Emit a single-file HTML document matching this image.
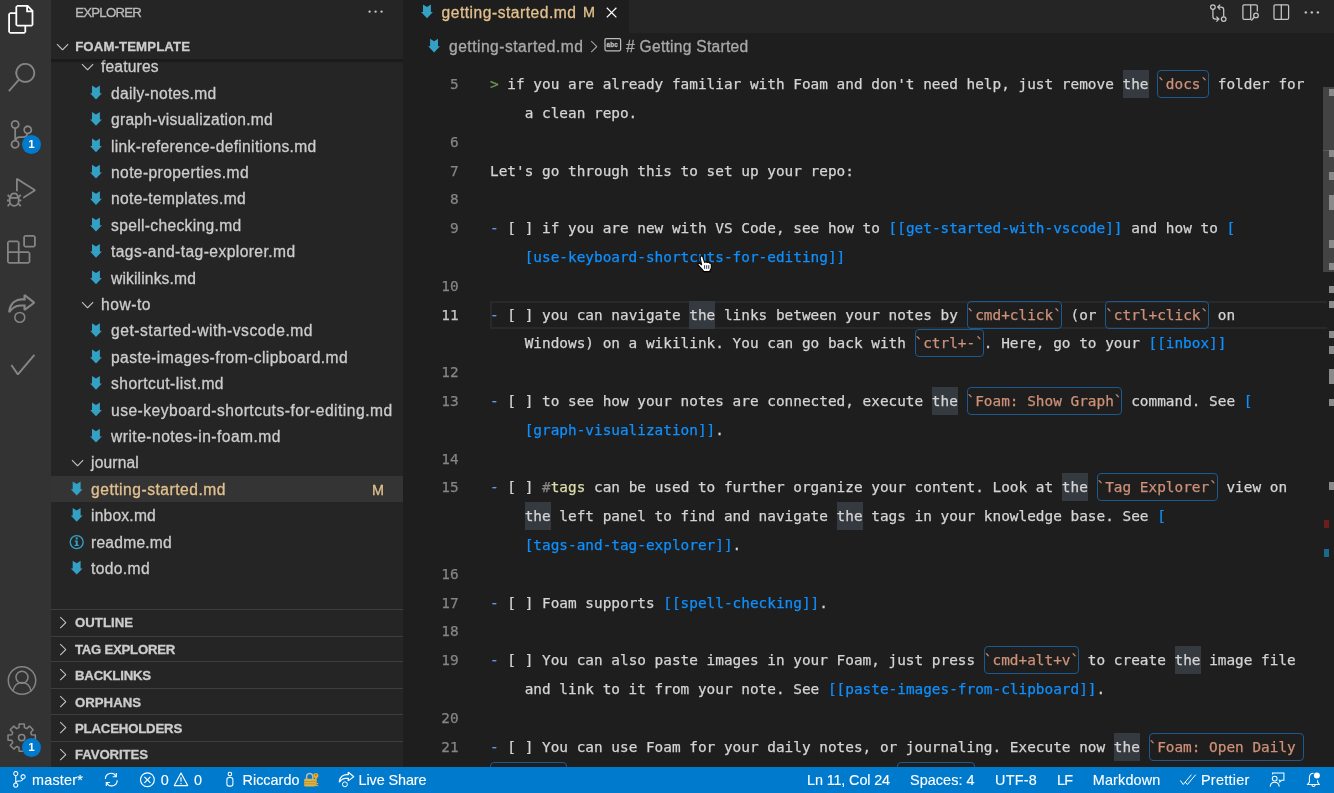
<!DOCTYPE html><html lang="en"><head><meta charset="utf-8"><title>getting-started.md - foam-template</title><style>
*{box-sizing:border-box;margin:0;padding:0}
html,body{width:1334px;height:793px;overflow:hidden;background:#1e1e1e}
body{position:relative;font-family:"Liberation Sans",sans-serif;color:#ccc;-webkit-font-smoothing:antialiased}
.abs{position:absolute}
#root{position:absolute;left:0;top:0;width:1334px;height:793px;overflow:hidden;will-change:transform}
#act{position:absolute;left:0;top:0;width:51px;height:767px;background:#333333}
#side{position:absolute;left:51px;top:0;width:352px;height:767px;background:#252526;overflow:hidden}
#ed{position:absolute;left:403px;top:0;width:931px;height:767px;background:#1e1e1e;overflow:hidden}
#status{position:absolute;left:0;top:767px;width:1334px;height:26px;background:#007acc;color:#fff;font-size:14.4px;line-height:26px;white-space:nowrap}
.t{position:absolute;white-space:pre;display:block;-webkit-text-stroke:0.3px currentColor;margin-top:1px}
.code{font-family:"DejaVu Sans Mono","Liberation Mono",monospace;font-size:14.4px;line-height:28.8px;white-space:pre;color:#d4d4d4;-webkit-text-stroke:0.25px currentColor}
.ln{position:absolute;left:0;width:55.6px;text-align:right;color:#858585}
.ln.cur{color:#c6c6c6}
.cl{position:absolute;height:28.8px}
.hl{position:absolute;height:28.4px;background:#343a40}
.cb{position:absolute;height:28.4px;border:1px solid #1b598f;border-radius:4px}
.k-q{color:#6a9955}.k-l{color:#6796e6}.k-w{color:#0e90ff}.k-c{color:#ce9178}.k-h{color:#858585}.k-t{color:#dcdcaa}
span.st{-webkit-text-stroke:0.12px currentColor}
svg{position:absolute;overflow:visible}
</style></head><body>
<div id="root"><div id="act"></div><div id="side"></div><div id="ed"></div>
<svg style="left:7.20px;top:5.10px" width="28.80" height="28.80" viewBox="0 0 24 24" fill="#ffffff" ><path d="M17.5 0h-9L7 1.5V6H2.5L1 7.5v15.07L2.5 24h12.07L16 22.57V18h4.7l1.3-1.43V4.5L17.5 0zm0 2.12l2.38 2.38H17.5V2.12zm-3 20.38h-12v-15H7v9.07L8.5 18h6v4.5zm6-6h-12v-15H16V6h4.5v10.5z"/></svg>
<svg style="left:7.20px;top:62.70px" width="28.80" height="28.80" viewBox="0 0 24 24" fill="#858585" ><path d="M15.25 0a8.25 8.25 0 0 0-6.18 13.72L1 22.88l1.12 1 8.05-9.12A8.251 8.251 0 1 0 15.25.01V0zm0 15a6.75 6.75 0 1 1 0-13.5 6.75 6.75 0 0 1 0 13.5z"/></svg>
<svg style="left:7.00px;top:120.30px" width="28.80" height="28.80" viewBox="0 0 24 24" fill="#858585" ><path d="M21.007 8.222A3.738 3.738 0 0 0 15.045 5.2a3.737 3.737 0 0 0 1.156 6.583 2.988 2.988 0 0 1-2.668 1.67h-2.99a4.456 4.456 0 0 0-2.989 1.165V7.4a3.737 3.737 0 1 0-1.494 0v9.117a3.776 3.776 0 1 0 1.816.099 2.99 2.99 0 0 1 2.668-1.667h2.99a4.484 4.484 0 0 0 4.223-3.039 3.736 3.736 0 0 0 3.25-3.687zM4.565 3.738a2.242 2.242 0 1 1 4.484 0 2.242 2.242 0 0 1-4.484 0zm4.484 16.441a2.242 2.242 0 1 1-4.484 0 2.242 2.242 0 0 1 4.484 0zm8.221-9.715a2.242 2.242 0 1 1 0-4.485 2.242 2.242 0 0 1 0 4.485z"/></svg>
<div class="abs" style="left:22.1px;top:135.0px;width:18.8px;height:18.8px;border-radius:50%;background:#007acc;color:#fff;font-size:11.5px;font-weight:bold;line-height:19.4px;text-align:center">1</div>
<svg style="left:7.00px;top:177.90px" width="28.80" height="28.80" viewBox="0 0 24 24" fill="#858585" ><path d="M10.94 13.5l-1.32 1.32a3.73 3.73 0 0 0-7.24 0L1.06 13.5 0 14.56l1.72 1.72-.22.22V18H0v1.5h1.5v.08c.077.489.214.966.41 1.42L0 22.94 1.06 24l1.65-1.65A4.308 4.308 0 0 0 6 24a4.31 4.31 0 0 0 3.29-1.65L10.94 24 12 22.94 10.09 21c.198-.464.336-.951.41-1.45v-.1H12V18h-1.5v-1.5l-.22-.22L12 14.56l-1.06-1.06zM6 13.5a2.25 2.25 0 0 1 2.25 2.25h-4.5A2.25 2.25 0 0 1 6 13.5zm3 6a3.33 3.33 0 0 1-3 3 3.33 3.33 0 0 1-3-3v-2.25h6v2.25zm14.76-9.9v1.26L13.5 17.37V15.6l8.5-5.37L9 2v9.46a5.07 5.07 0 0 0-1.5-.72V.63L8.64 0l15.12 9.6z"/></svg>
<svg style="left:6.60px;top:234.50px" width="28.80" height="28.80" viewBox="0 0 24 24" fill="#858585" ><path d="M13.5 1.5L15 0h7.5L24 1.5V9l-1.5 1.5H15L13.5 9V1.5zm1.5 0V9h7.5V1.5H15zM0 15V6l1.5-1.5H9L10.5 6v7.5H18l1.5 1.5v7.5L18 24H1.5L0 22.5V15zm9-1.5V6H1.5v7.5H9zM9 15H1.5v7.5H9V15zm1.5 7.5H18V15h-7.5v7.5z" fill-rule="evenodd"/></svg>
<svg style="left:7.20px;top:293.00px" width="28.80" height="28.80" viewBox="0 0 24 24" fill="#858585" ><path d="M13.735 1.694L15.178 1l8.029 6.328v1.388l-8.029 6.072-1.443-.694v-2.776h-.59c-4.06-.02-6.71.104-10.61 5.163l-1.534-.493a8.23 8.23 0 0 1 .271-2.255 11.026 11.026 0 0 1 3.92-6.793 11.339 11.339 0 0 1 7.502-2.547h1.04v-2.7zm1.804 7.917v2.776l5.676-4.3-5.648-4.553v2.664h-2.86A9.299 9.299 0 0 0 5.77 8.5a10.444 10.444 0 0 0-2.401 4.714c3.31-3.586 6.13-3.603 10.07-3.603h2.1z"/></svg>
<svg style="left:0;top:0" width="1" height="1"><circle cx="19.8" cy="317.4" r="4.95" fill="none" stroke="#858585" stroke-width="1.5"/></svg>
<svg style="left:6.60px;top:348.70px" width="31.20" height="31.20" viewBox="0 0 16 16" fill="#858585" ><path d="M14.431 3.323l-8.47 10-.79-.036-3.35-4.77.818-.574 2.978 4.24 8.051-9.506.764.646z"/></svg>
<svg style="left:0;top:0" width="1" height="1"><g fill="none" stroke="#858585" stroke-width="1.5"><circle cx="22" cy="680.5" r="13.7"/><circle cx="22" cy="677.2" r="6.0"/><path d="M13.00 691.50C13.80 679.50 30.20 679.50 31.00 691.50"/></g></svg>
<svg style="left:0;top:0" width="1" height="1"><g fill="none" stroke="#858585" stroke-width="1.5" stroke-linejoin="round"><path d="M31.63 734.85 L35.36 735.04 L35.36 740.16 L31.63 740.35 L30.66 742.68 L33.17 745.45 L29.55 749.07 L26.78 746.56 L24.45 747.53 L24.26 751.26 L19.14 751.26 L18.95 747.53 L16.62 746.56 L13.85 749.07 L10.23 745.45 L12.74 742.68 L11.77 740.35 L8.04 740.16 L8.04 735.04 L11.77 734.85 L12.74 732.52 L10.23 729.75 L13.85 726.13 L16.62 728.64 L18.95 727.67 L19.14 723.94 L24.26 723.94 L24.45 727.67 L26.78 728.64 L29.55 726.13 L33.17 729.75 L30.66 732.52Z"/><circle cx="21.7" cy="737.6" r="3.2"/></g></svg>
<div class="abs" style="left:22.1px;top:738.0px;width:18.8px;height:18.8px;border-radius:50%;background:#007acc;color:#fff;font-size:11.5px;font-weight:bold;line-height:19.4px;text-align:center">1</div>
<svg style="left:78.20px;top:57.30px" width="19.20" height="19.20" viewBox="0 0 16 16" fill="#c5c5c5" ><path d="M7.976 10.072l4.357-4.357.62.618L8.284 11h-.618L3 6.333l.619-.618 4.357 4.357z"/></svg>
<span class="t " style="left:101.00px;top:53.40px;font-size:15.6px;line-height:26.4px;color:#cccccc;letter-spacing:0.168px;">features</span>
<svg style="left:0;top:0" width="1" height="1"><path d="M91.99 85.60 L96.00 88.08 L99.89 85.60 L99.89 93.19 L101.90 93.19 L96.00 99.40 L90.10 93.19 L91.99 93.19Z" fill="#34a0c4"/></svg>
<span class="t " style="left:111.00px;top:79.80px;font-size:15.6px;line-height:26.4px;color:#cccccc;letter-spacing:0.292px;">daily-notes.md</span>
<svg style="left:0;top:0" width="1" height="1"><path d="M91.99 112.00 L96.00 114.48 L99.89 112.00 L99.89 119.59 L101.90 119.59 L96.00 125.80 L90.10 119.59 L91.99 119.59Z" fill="#34a0c4"/></svg>
<span class="t " style="left:111.00px;top:106.20px;font-size:15.6px;line-height:26.4px;color:#cccccc;letter-spacing:0.272px;">graph-visualization.md</span>
<svg style="left:0;top:0" width="1" height="1"><path d="M91.99 138.40 L96.00 140.88 L99.89 138.40 L99.89 145.99 L101.90 145.99 L96.00 152.20 L90.10 145.99 L91.99 145.99Z" fill="#34a0c4"/></svg>
<span class="t " style="left:111.00px;top:132.60px;font-size:15.6px;line-height:26.4px;color:#cccccc;letter-spacing:0.332px;">link-reference-definitions.md</span>
<svg style="left:0;top:0" width="1" height="1"><path d="M91.99 164.80 L96.00 167.28 L99.89 164.80 L99.89 172.39 L101.90 172.39 L96.00 178.60 L90.10 172.39 L91.99 172.39Z" fill="#34a0c4"/></svg>
<span class="t " style="left:111.00px;top:159.00px;font-size:15.6px;line-height:26.4px;color:#cccccc;letter-spacing:0.395px;">note-properties.md</span>
<svg style="left:0;top:0" width="1" height="1"><path d="M91.99 191.20 L96.00 193.68 L99.89 191.20 L99.89 198.79 L101.90 198.79 L96.00 205.00 L90.10 198.79 L91.99 198.79Z" fill="#34a0c4"/></svg>
<span class="t " style="left:111.00px;top:185.40px;font-size:15.6px;line-height:26.4px;color:#cccccc;letter-spacing:0.344px;">note-templates.md</span>
<svg style="left:0;top:0" width="1" height="1"><path d="M91.99 217.60 L96.00 220.08 L99.89 217.60 L99.89 225.19 L101.90 225.19 L96.00 231.40 L90.10 225.19 L91.99 225.19Z" fill="#34a0c4"/></svg>
<span class="t " style="left:111.00px;top:211.80px;font-size:15.6px;line-height:26.4px;color:#cccccc;letter-spacing:0.335px;">spell-checking.md</span>
<svg style="left:0;top:0" width="1" height="1"><path d="M91.99 244.00 L96.00 246.48 L99.89 244.00 L99.89 251.59 L101.90 251.59 L96.00 257.80 L90.10 251.59 L91.99 251.59Z" fill="#34a0c4"/></svg>
<span class="t " style="left:111.00px;top:238.20px;font-size:15.6px;line-height:26.4px;color:#cccccc;letter-spacing:0.428px;">tags-and-tag-explorer.md</span>
<svg style="left:0;top:0" width="1" height="1"><path d="M91.99 270.40 L96.00 272.88 L99.89 270.40 L99.89 277.99 L101.90 277.99 L96.00 284.20 L90.10 277.99 L91.99 277.99Z" fill="#34a0c4"/></svg>
<span class="t " style="left:111.00px;top:264.60px;font-size:15.6px;line-height:26.4px;color:#cccccc;letter-spacing:0.151px;">wikilinks.md</span>
<svg style="left:78.20px;top:294.90px" width="19.20" height="19.20" viewBox="0 0 16 16" fill="#c5c5c5" ><path d="M7.976 10.072l4.357-4.357.62.618L8.284 11h-.618L3 6.333l.619-.618 4.357 4.357z"/></svg>
<span class="t " style="left:101.00px;top:291.00px;font-size:15.6px;line-height:26.4px;color:#cccccc;letter-spacing:0.531px;">how-to</span>
<svg style="left:0;top:0" width="1" height="1"><path d="M91.99 323.20 L96.00 325.68 L99.89 323.20 L99.89 330.79 L101.90 330.79 L96.00 337.00 L90.10 330.79 L91.99 330.79Z" fill="#34a0c4"/></svg>
<span class="t " style="left:111.00px;top:317.40px;font-size:15.6px;line-height:26.4px;color:#cccccc;letter-spacing:0.536px;">get-started-with-vscode.md</span>
<svg style="left:0;top:0" width="1" height="1"><path d="M91.99 349.60 L96.00 352.08 L99.89 349.60 L99.89 357.19 L101.90 357.19 L96.00 363.40 L90.10 357.19 L91.99 357.19Z" fill="#34a0c4"/></svg>
<span class="t " style="left:111.00px;top:343.80px;font-size:15.6px;line-height:26.4px;color:#cccccc;letter-spacing:0.418px;">paste-images-from-clipboard.md</span>
<svg style="left:0;top:0" width="1" height="1"><path d="M91.99 376.00 L96.00 378.48 L99.89 376.00 L99.89 383.59 L101.90 383.59 L96.00 389.80 L90.10 383.59 L91.99 383.59Z" fill="#34a0c4"/></svg>
<span class="t " style="left:111.00px;top:370.20px;font-size:15.6px;line-height:26.4px;color:#cccccc;letter-spacing:0.455px;">shortcut-list.md</span>
<svg style="left:0;top:0" width="1" height="1"><path d="M91.99 402.40 L96.00 404.88 L99.89 402.40 L99.89 409.99 L101.90 409.99 L96.00 416.20 L90.10 409.99 L91.99 409.99Z" fill="#34a0c4"/></svg>
<span class="t " style="left:111.00px;top:396.60px;font-size:15.6px;line-height:26.4px;color:#cccccc;letter-spacing:0.490px;">use-keyboard-shortcuts-for-editing.md</span>
<svg style="left:0;top:0" width="1" height="1"><path d="M91.99 428.80 L96.00 431.28 L99.89 428.80 L99.89 436.39 L101.90 436.39 L96.00 442.60 L90.10 436.39 L91.99 436.39Z" fill="#34a0c4"/></svg>
<span class="t " style="left:111.00px;top:423.00px;font-size:15.6px;line-height:26.4px;color:#cccccc;letter-spacing:0.479px;">write-notes-in-foam.md</span>
<svg style="left:68.20px;top:453.30px" width="19.20" height="19.20" viewBox="0 0 16 16" fill="#c5c5c5" ><path d="M7.976 10.072l4.357-4.357.62.618L8.284 11h-.618L3 6.333l.619-.618 4.357 4.357z"/></svg>
<span class="t " style="left:91.00px;top:449.40px;font-size:15.6px;line-height:26.4px;color:#cccccc;letter-spacing:0.170px;">journal</span>
<div class="abs" style="left:51px;top:475.80px;width:352px;height:26.4px;background:#343435"></div>
<span class="t " style="left:372.00px;top:477.50px;font-size:14.4px;line-height:23.0px;color:#e2c08d;letter-spacing:-0.500px;">M</span>
<svg style="left:0;top:0" width="1" height="1"><path d="M72.69 481.60 L76.70 484.08 L80.59 481.60 L80.59 489.19 L82.60 489.19 L76.70 495.40 L70.80 489.19 L72.69 489.19Z" fill="#34a0c4"/></svg>
<span class="t " style="left:91.00px;top:475.80px;font-size:15.6px;line-height:26.4px;color:#e2c08d;letter-spacing:0.517px;">getting-started.md</span>
<svg style="left:0;top:0" width="1" height="1"><path d="M72.69 508.00 L76.70 510.48 L80.59 508.00 L80.59 515.59 L82.60 515.59 L76.70 521.80 L70.80 515.59 L72.69 515.59Z" fill="#34a0c4"/></svg>
<span class="t " style="left:91.00px;top:502.20px;font-size:15.6px;line-height:26.4px;color:#cccccc;letter-spacing:0.215px;">inbox.md</span>
<svg style="left:0;top:0" width="1" height="1"><circle cx="76.7" cy="542.0999999999999" r="6.5" fill="none" stroke="#34a0c4" stroke-width="1.35"/><path d="M74.8 540.4999999999999H77.7V544.6999999999999H78.8V545.8999999999999H74.60000000000001V544.6999999999999H75.8V541.6999999999999H74.8Z" fill="#34a0c4"/><circle cx="76.7" cy="538.4999999999999" r="1.15" fill="#34a0c4"/></svg>
<span class="t " style="left:91.00px;top:528.60px;font-size:15.6px;line-height:26.4px;color:#cccccc;letter-spacing:0.236px;">readme.md</span>
<svg style="left:0;top:0" width="1" height="1"><path d="M72.69 560.80 L76.70 563.28 L80.59 560.80 L80.59 568.39 L82.60 568.39 L76.70 574.60 L70.80 568.39 L72.69 568.39Z" fill="#34a0c4"/></svg>
<span class="t " style="left:91.00px;top:555.00px;font-size:15.6px;line-height:26.4px;color:#cccccc;letter-spacing:0.377px;">todo.md</span>
<div class="abs" style="left:51px;top:0;width:352px;height:59px;background:#252526"></div>
<div class="abs" style="left:51px;top:58.6px;width:352px;height:4.6px;background:linear-gradient(rgba(0,0,0,.32),rgba(0,0,0,.26) 60%,rgba(0,0,0,0))"></div>
<span class="t " style="left:75.20px;top:0.75px;font-size:13.2px;line-height:21.1px;color:#bbbbbb;letter-spacing:-0.754px;">EXPLORER</span>
<svg style="left:365.90px;top:1.90px" width="19.20" height="19.20" viewBox="0 0 16 16" fill="#c5c5c5" ><path d="M4 8a1 1 0 1 1-2 0 1 1 0 0 1 2 0zm5 0a1 1 0 1 1-2 0 1 1 0 0 1 2 0zm5 0a1 1 0 1 1-2 0 1 1 0 0 1 2 0z"/></svg>
<svg style="left:52.90px;top:36.90px" width="19.20" height="19.20" viewBox="0 0 16 16" fill="#c5c5c5" ><path d="M7.976 10.072l4.357-4.357.62.618L8.284 11h-.618L3 6.333l.619-.618 4.357 4.357z"/></svg>
<span class="t " style="left:75.20px;top:34.75px;font-size:13.2px;line-height:21.1px;color:#cccccc;font-weight:bold;letter-spacing:0.122px;">FOAM-TEMPLATE</span>
<div class="abs" style="left:51px;top:609.0px;width:352px;height:1px;background:#3e3e3f"></div>
<svg style="left:53.20px;top:612.80px" width="19.20" height="19.20" viewBox="0 0 16 16" fill="#c5c5c5" ><path d="M10.072 8.024L5.715 3.667l.618-.62L11 7.716v.618L6.333 13l-.618-.619 4.357-4.357z"/></svg>
<span class="t " style="left:75.00px;top:610.95px;font-size:13.2px;line-height:21.1px;color:#cccccc;font-weight:bold;letter-spacing:0.016px;">OUTLINE</span>
<div class="abs" style="left:51px;top:636.0px;width:352px;height:1px;background:#3e3e3f"></div>
<svg style="left:53.20px;top:639.80px" width="19.20" height="19.20" viewBox="0 0 16 16" fill="#c5c5c5" ><path d="M10.072 8.024L5.715 3.667l.618-.62L11 7.716v.618L6.333 13l-.618-.619 4.357-4.357z"/></svg>
<span class="t " style="left:75.00px;top:637.75px;font-size:13.2px;line-height:21.1px;color:#cccccc;font-weight:bold;letter-spacing:-0.257px;">TAG EXPLORER</span>
<div class="abs" style="left:51px;top:661.0px;width:352px;height:1px;background:#3e3e3f"></div>
<svg style="left:53.20px;top:664.80px" width="19.20" height="19.20" viewBox="0 0 16 16" fill="#c5c5c5" ><path d="M10.072 8.024L5.715 3.667l.618-.62L11 7.716v.618L6.333 13l-.618-.619 4.357-4.357z"/></svg>
<span class="t " style="left:75.00px;top:664.05px;font-size:13.2px;line-height:21.1px;color:#cccccc;font-weight:bold;letter-spacing:-0.186px;">BACKLINKS</span>
<div class="abs" style="left:51px;top:688.0px;width:352px;height:1px;background:#3e3e3f"></div>
<svg style="left:53.20px;top:691.80px" width="19.20" height="19.20" viewBox="0 0 16 16" fill="#c5c5c5" ><path d="M10.072 8.024L5.715 3.667l.618-.62L11 7.716v.618L6.333 13l-.618-.619 4.357-4.357z"/></svg>
<span class="t " style="left:75.00px;top:690.95px;font-size:13.2px;line-height:21.1px;color:#cccccc;font-weight:bold;letter-spacing:0.007px;">ORPHANS</span>
<div class="abs" style="left:51px;top:714.0px;width:352px;height:1px;background:#3e3e3f"></div>
<svg style="left:53.20px;top:717.80px" width="19.20" height="19.20" viewBox="0 0 16 16" fill="#c5c5c5" ><path d="M10.072 8.024L5.715 3.667l.618-.62L11 7.716v.618L6.333 13l-.618-.619 4.357-4.357z"/></svg>
<span class="t " style="left:75.00px;top:717.15px;font-size:13.2px;line-height:21.1px;color:#cccccc;font-weight:bold;letter-spacing:-0.181px;">PLACEHOLDERS</span>
<div class="abs" style="left:51px;top:741.0px;width:352px;height:1px;background:#3e3e3f"></div>
<svg style="left:53.20px;top:744.80px" width="19.20" height="19.20" viewBox="0 0 16 16" fill="#c5c5c5" ><path d="M10.072 8.024L5.715 3.667l.618-.62L11 7.716v.618L6.333 13l-.618-.619 4.357-4.357z"/></svg>
<span class="t " style="left:75.00px;top:743.25px;font-size:13.2px;line-height:21.1px;color:#cccccc;font-weight:bold;letter-spacing:-0.085px;">FAVORITES</span>
<div class="abs" style="left:403px;top:0;width:931px;height:33px;background:#252526"></div>
<div class="abs" style="left:403px;top:0;width:226px;height:33px;background:#1e1e1e"></div>
<svg style="left:0;top:0" width="1" height="1"><path d="M422.99 4.50 L427.00 6.98 L430.89 4.50 L430.89 12.09 L432.90 12.09 L427.00 18.30 L421.10 12.09 L422.99 12.09Z" fill="#34a0c4"/></svg>
<span class="t " style="left:441.50px;top:-1.20px;font-size:15.6px;line-height:25.0px;color:#e2c08d;letter-spacing:0.517px;">getting-started.md</span>
<span class="t " style="left:583.00px;top:-0.20px;font-size:14.4px;line-height:23.0px;color:#e2c08d;">M</span>
<svg style="left:602.40px;top:2.90px" width="19.20" height="19.20" viewBox="0 0 16 16" fill="#ffffff" ><path d="M8 8.707l3.646 3.647.708-.707L8.707 8l3.647-3.646-.707-.708L8 7.293 4.354 3.646l-.707.708L7.293 8l-3.646 3.646.707.708L8 8.707z"/></svg>
<svg style="left:0;top:0" width="1" height="1"><g fill="none" stroke="#c5c5c5" stroke-width="1.25"><circle cx="1212.9" cy="7.1" r="2.3"/><circle cx="1223.7" cy="19.1" r="2.3"/><path d="M1212.9 9.4V16.4Q1212.9 19.1 1215.6 19.1H1218.6M1216.4 16.6L1218.9 19.1L1216.4 21.6"/><path d="M1223.7 16.8V9.8Q1223.7 7.1 1221 7.1H1218M1220.2 4.6L1217.7 7.1L1220.2 9.6"/></g><g fill="none" stroke="#c5c5c5" stroke-width="1.25"><path d="M1250.7 19.4H1244.2Q1242.9 19.4 1242.9 18.1V6.1Q1242.9 4.8 1244.2 4.8H1256Q1257.3 4.8 1257.3 6.1V11.6M1250.7 4.8V19.4"/><circle cx="1256" cy="15.4" r="2.3"/><path d="M1254.4 17L1251.3 20.5"/></g><g fill="none" stroke="#c5c5c5" stroke-width="1.25"><rect x="1274" y="4.8" width="14.6" height="14.6" rx="1.3"/><path d="M1281.3 4.8V19.4"/></g><g fill="#c5c5c5"><circle cx="1305.8" cy="12.4" r="1.2"/><circle cx="1311.8" cy="12.4" r="1.2"/><circle cx="1317.9" cy="12.4" r="1.2"/></g></svg>
<svg style="left:0;top:0" width="1" height="1"><rect x="605" y="38.7" width="15.6" height="12.1" rx="1.2" fill="none" stroke="#bdbdbd" stroke-width="1.25"/></svg><span class="t" style="left:606.6px;top:38.9px;font-size:6.3px;line-height:9px;font-weight:bold;color:#bdbdbd;letter-spacing:0.1px">abc</span>
<svg style="left:0;top:0" width="1" height="1"><path d="M430.09 38.70 L434.10 41.18 L437.99 38.70 L437.99 46.29 L440.00 46.29 L434.10 52.50 L428.20 46.29 L430.09 46.29Z" fill="#34a0c4"/></svg>
<span class="t " style="left:449.00px;top:33.30px;font-size:15.6px;line-height:25.0px;color:#a9a9a9;letter-spacing:0.490px;">getting-started.md</span>
<svg style="left:583.90px;top:37.20px" width="19.20" height="19.20" viewBox="0 0 16 16" fill="#a9a9a9" ><path d="M10.072 8.024L5.715 3.667l.618-.62L11 7.716v.618L6.333 13l-.618-.619 4.357-4.357z"/></svg>
<span class="t " style="left:626.00px;top:33.30px;font-size:15.6px;line-height:25.0px;color:#a9a9a9;letter-spacing:0.271px;"># Getting Started</span>
<div class="abs" style="left:490px;top:301px;width:837px;height:28px;border:2px solid #292929;border-right:0"></div>
<div class="code ln" style="left:403px;top:70.00px">5</div>
<div class="hl" style="left:1122.87px;top:70.00px;width:26.01px"></div>
<div class="cb" style="left:1157.30px;top:70.00px;width:51.67px"></div>
<div class="code cl" style="left:490.0px;top:70.00px"><span class="k-q">&gt;</span> if you are already familiar with Foam and don't need help, just remove the <span class="k-c">`docs`</span> folder for</div>
<div class="code cl" style="left:490.0px;top:99.00px">    a clean repo.</div>
<div class="code ln" style="left:403px;top:128.00px">6</div>
<div class="code ln" style="left:403px;top:157.00px">7</div>
<div class="code cl" style="left:490.0px;top:157.00px">Let's go through this to set up your repo:</div>
<div class="code ln" style="left:403px;top:185.00px">8</div>
<div class="code ln" style="left:403px;top:214.00px">9</div>
<div class="code cl" style="left:490.0px;top:214.00px"><span class="k-l">-</span> [ ] if you are new with VS Code, see how to <span class="k-w">[[get-started-with-vscode]]</span> and how to <span class="k-w">[</span></div>
<div class="code cl" style="left:490.0px;top:243.00px">    <span class="k-w">[use-keyboard-shortcuts-for-editing]]</span></div>
<div class="code ln" style="left:403px;top:272.00px">10</div>
<div class="code ln cur" style="left:403px;top:301.00px">11</div>
<div class="hl" style="left:689.40px;top:301.00px;width:26.01px"></div>
<div class="cb" style="left:966.57px;top:301.00px;width:95.01px"></div>
<div class="cb" style="left:1105.28px;top:301.00px;width:103.68px"></div>
<div class="code cl" style="left:490.0px;top:301.00px"><span class="k-l">-</span> [ ] you can navigate the links between your notes by <span class="k-c">`cmd+click`</span> (or <span class="k-c">`ctrl+click`</span> on</div>
<div class="cb" style="left:914.56px;top:329.00px;width:69.01px"></div>
<div class="code cl" style="left:490.0px;top:329.00px">    Windows) on a wikilink. You can go back with <span class="k-c">`ctrl+-`</span>. Here, go to your <span class="k-w">[[inbox]]</span></div>
<div class="code ln" style="left:403px;top:358.00px">12</div>
<div class="code ln" style="left:403px;top:387.00px">13</div>
<div class="hl" style="left:932.14px;top:387.00px;width:26.01px"></div>
<div class="cb" style="left:966.57px;top:387.00px;width:155.70px"></div>
<div class="code cl" style="left:490.0px;top:387.00px"><span class="k-l">-</span> [ ] to see how your notes are connected, execute the <span class="k-c">`Foam: Show Graph`</span> command. See <span class="k-w">[</span></div>
<div class="code cl" style="left:490.0px;top:416.00px">    <span class="k-w">[graph-visualization]]</span>.</div>
<div class="code ln" style="left:403px;top:445.00px">14</div>
<div class="code ln" style="left:403px;top:473.00px">15</div>
<div class="hl" style="left:1062.19px;top:473.00px;width:26.01px"></div>
<div class="cb" style="left:1096.62px;top:473.00px;width:121.02px"></div>
<div class="code cl" style="left:490.0px;top:473.00px"><span class="k-l">-</span> [ ] <span class="k-h">#</span><span class="k-t">tags</span> can be used to further organize your content. Look at the <span class="k-c">`Tag Explorer`</span> view on</div>
<div class="hl" style="left:524.68px;top:502.00px;width:26.01px"></div>
<div class="hl" style="left:836.78px;top:502.00px;width:26.01px"></div>
<div class="code cl" style="left:490.0px;top:502.00px">    the left panel to find and navigate the tags in your knowledge base. See <span class="k-w">[</span></div>
<div class="code cl" style="left:490.0px;top:531.00px">    <span class="k-w">[tags-and-tag-explorer]]</span>.</div>
<div class="code ln" style="left:403px;top:560.00px">16</div>
<div class="code ln" style="left:403px;top:589.00px">17</div>
<div class="code cl" style="left:490.0px;top:589.00px"><span class="k-l">-</span> [ ] Foam supports <span class="k-w">[[spell-checking]]</span>.</div>
<div class="code ln" style="left:403px;top:617.00px">18</div>
<div class="code ln" style="left:403px;top:646.00px">19</div>
<div class="hl" style="left:1174.89px;top:646.00px;width:26.01px"></div>
<div class="cb" style="left:983.91px;top:646.00px;width:95.01px"></div>
<div class="code cl" style="left:490.0px;top:646.00px"><span class="k-l">-</span> [ ] You can also paste images in your Foam, just press <span class="k-c">`cmd+alt+v`</span> to create the image file</div>
<div class="code cl" style="left:490.0px;top:675.00px">    and link to it from your note. See <span class="k-w">[[paste-images-from-clipboard]]</span>.</div>
<div class="code ln" style="left:403px;top:704.00px">20</div>
<div class="code ln" style="left:403px;top:733.00px">21</div>
<div class="hl" style="left:1114.20px;top:733.00px;width:26.01px"></div>
<div class="cb" style="left:1148.63px;top:733.00px;width:155.70px"></div>
<div class="code cl" style="left:490.0px;top:733.00px"><span class="k-l">-</span> [ ] You can use Foam for your daily notes, or journaling. Execute now the <span class="k-c">`Foam: Open Daily </span></div>
<div class="cb" style="left:489.75px;top:762.00px;width:77.68px"></div>
<div class="cb" style="left:897.22px;top:762.00px;width:77.68px"></div>
<div class="code cl" style="left:490.0px;top:762.00px"><span class="k-c">    Note`</span> command to create a new file in your <span class="k-c">`journal`</span> folder.</div>
<div class="abs" style="left:1323px;top:87px;width:11px;height:185px;background:#434343"></div>
<div class="abs" style="left:1323px;top:149.5px;width:11px;height:1px;background:#5a5a5a"></div>
<div class="abs" style="left:1328.5px;top:89.4px;width:5.5px;height:7.0px;background:#8a8a8a"></div>
<div class="abs" style="left:1328.5px;top:150px;width:5.5px;height:7.0px;background:#8a8a8a"></div>
<div class="abs" style="left:1328.5px;top:172px;width:5.5px;height:7.7px;background:#8a8a8a"></div>
<div class="abs" style="left:1328.5px;top:194.8px;width:5.5px;height:15.2px;background:#8a8a8a"></div>
<div class="abs" style="left:1328.5px;top:240px;width:5.5px;height:7.5px;background:#8a8a8a"></div>
<div class="abs" style="left:1328.5px;top:263px;width:5.5px;height:7.3px;background:#8a8a8a"></div>
<div class="abs" style="left:1328.5px;top:285.8px;width:5.5px;height:7.0px;background:#8a8a8a"></div>
<div class="abs" style="left:1328.5px;top:301px;width:5.5px;height:7.0px;background:#8a8a8a"></div>
<div class="abs" style="left:1328.5px;top:331px;width:5.5px;height:7.0px;background:#8a8a8a"></div>
<div class="abs" style="left:1328.5px;top:346px;width:5.5px;height:7.5px;background:#8a8a8a"></div>
<div class="abs" style="left:1328.5px;top:369px;width:5.5px;height:14.5px;background:#8a8a8a"></div>
<div class="abs" style="left:1328.5px;top:398.8px;width:5.5px;height:7.2px;background:#8a8a8a"></div>
<div class="abs" style="left:1328.5px;top:482.4px;width:5.5px;height:7.6px;background:#8a8a8a"></div>
<div class="abs" style="left:1323.5px;top:519.5px;width:5px;height:8.3px;background:#6b1c1c"></div>
<div class="abs" style="left:1323.5px;top:549.4px;width:5px;height:8px;background:#1b6a8e"></div>
<svg style="left:0;top:0" width="1" height="1"><g transform="translate(0.00 0.00)"><path d="M700.6 256.6C701.0 255.7 702.4 255.7 702.8 256.8L704.6 262.4C705.5 261.6 706.8 261.8 707.2 262.6C708.0 262.0 709.2 262.3 709.5 263.2C710.3 262.9 711.2 263.4 711.3 264.4L711.4 267.0C711.4 268.6 710.6 269.6 710.0 270.4L709.9 271.6L703.4 271.6L703.2 270.6C702.0 269.0 700.0 267.0 698.4 265.2C697.5 264.2 698.3 262.8 699.6 263.4L701.6 264.8L700.2 258.0C700.1 257.4 700.2 257.0 700.6 256.6Z" fill="#fff" stroke="#000" stroke-width="1.1" stroke-linejoin="round"/><path d="M704.6 265.2V268.8M706.7 265.2V268.8M708.8 265.2V268.8" stroke="#000" stroke-width="0.8" fill="none"/></g></svg>
<div id="status"></div>
<svg style="left:10.80px;top:771.10px" width="16.80" height="16.80" viewBox="0 0 24 24" fill="#ffffff" ><path d="M21.007 8.222A3.738 3.738 0 0 0 15.045 5.2a3.737 3.737 0 0 0 1.156 6.583 2.988 2.988 0 0 1-2.668 1.67h-2.99a4.456 4.456 0 0 0-2.989 1.165V7.4a3.737 3.737 0 1 0-1.494 0v9.117a3.776 3.776 0 1 0 1.816.099 2.99 2.99 0 0 1 2.668-1.667h2.99a4.484 4.484 0 0 0 4.223-3.039 3.736 3.736 0 0 0 3.25-3.687zM4.565 3.738a2.242 2.242 0 1 1 4.484 0 2.242 2.242 0 0 1-4.484 0zm4.484 16.441a2.242 2.242 0 1 1-4.484 0 2.242 2.242 0 0 1 4.484 0zm8.221-9.715a2.242 2.242 0 1 1 0-4.485 2.242 2.242 0 0 1 0 4.485z"/></svg>
<svg style="left:337.80px;top:771.30px" width="16.80" height="16.80" viewBox="0 0 24 24" fill="#ffffff" ><path d="M13.735 1.694L15.178 1l8.029 6.328v1.388l-8.029 6.072-1.443-.694v-2.776h-.59c-4.06-.02-6.71.104-10.61 5.163l-1.534-.493a8.23 8.23 0 0 1 .271-2.255 11.026 11.026 0 0 1 3.92-6.793 11.339 11.339 0 0 1 7.502-2.547h1.04v-2.7zm1.804 7.917v2.776l5.676-4.3-5.648-4.553v2.664h-2.86A9.299 9.299 0 0 0 5.77 8.5a10.444 10.444 0 0 0-2.401 4.714c3.31-3.586 6.13-3.603 10.07-3.603h2.1z"/></svg>
<svg style="left:0;top:0" width="1" height="1"><circle cx="344.9" cy="784.3" r="2.45" fill="none" stroke="#ffffff" stroke-width="1.0"/></svg>
<svg style="left:0;top:0" width="1" height="1"><g fill="none" stroke="#fff" stroke-width="1.15"><path d="M105.40 779.00A5.6 5.6 0 0 1 116.00 776.40"/><path d="M117.20 780.20A5.6 5.6 0 0 1 106.60 782.80"/><path d="M112.70 776.70H116.30V773.10"/><path d="M109.90 782.50H106.30V786.10"/></g><g fill="none" stroke="#fff" stroke-width="1.15"><circle cx="147.4" cy="779.8" r="6.9"/><path d="M144.4 776.8L150.4 782.8M150.4 776.8L144.4 782.8"/></g><g fill="none" stroke="#fff" stroke-width="1.15" stroke-linejoin="round"><path d="M181 773L187.7 785.6H174.3Z"/><path d="M181 777.2V781.8M181 783V784.3"/></g><g fill="none" stroke="#fff" stroke-width="1.05"><circle cx="229.9" cy="774.1" r="1.8"/><rect x="226.9" y="777.5" width="6.0" height="8.6" rx="2.2"/></g><g><path d="M306.6 779.5V776.6a3.1 3.1 0 0 1 6.2 0V779.5" fill="none" stroke="#b8b8b8" stroke-width="1.5"/><rect x="304.2" y="778.8" width="10.8" height="7.6" rx="1" fill="#d9b54a"/><rect x="304.2" y="781" width="10.8" height="0.9" fill="#b8922f"/><rect x="304.2" y="783.4" width="10.8" height="0.9" fill="#b8922f"/><circle cx="315.8" cy="775.6" r="2.6" fill="#f0a52b"/><circle cx="315.8" cy="774.9" r="0.8" fill="#9a6a10"/><rect x="315" y="777.6" width="1.7" height="8.6" fill="#f0a52b"/><rect x="316.7" y="783" width="1.5" height="1.1" fill="#f0a52b"/><rect x="316.7" y="785" width="1.5" height="1.1" fill="#f0a52b"/></g><g fill="none" stroke="#fff" stroke-width="1.0"><path d="M1180.3 780.4L1183.2 784.5L1191.4 774.7"/><path d="M1185.2 782L1187.4 784.5L1195.7 774.7"/></g><g fill="none" stroke="#fff" stroke-width="1.05"><circle cx="1274.7" cy="778.6" r="2.4"/><path d="M1270.2 786.6C1270.6 780.9 1278.8 780.9 1279.2 786.6"/><path d="M1272.6 774.6V773H1283.9V780.2H1281.6L1279.8 782V780.2H1278.6"/></g><g fill="none" stroke="#fff" stroke-width="1.05"><path d="M1313.6 773.2C1310.6 773.2 1309.4 775.4 1309.4 778V782L1307.6 784.4H1319.2L1317.6 782V780.2"/><path d="M1311.8 784.6C1311.8 787.2 1315.2 787.2 1315.2 784.6"/></g><circle cx="1316.9" cy="775.4" r="3" fill="#fff"/></svg>
<span class="t st" style="left:32.00px;top:768.10px;font-size:14.4px;line-height:23.0px;color:#ffffff;letter-spacing:0.201px;">master*</span>
<span class="t st" style="left:160.70px;top:768.10px;font-size:14.4px;line-height:23.0px;color:#ffffff;letter-spacing:-0.516px;">0</span>
<span class="t st" style="left:194.00px;top:768.10px;font-size:14.4px;line-height:23.0px;color:#ffffff;letter-spacing:-0.516px;">0</span>
<span class="t st" style="left:242.50px;top:768.10px;font-size:14.4px;line-height:23.0px;color:#ffffff;letter-spacing:0.025px;">Riccardo</span>
<span class="t st" style="left:358.60px;top:768.10px;font-size:14.4px;line-height:23.0px;color:#ffffff;letter-spacing:-0.091px;">Live Share</span>
<span class="t st" style="left:807.00px;top:768.10px;font-size:14.4px;line-height:23.0px;color:#ffffff;letter-spacing:-0.119px;">Ln 11, Col 24</span>
<span class="t st" style="left:910.00px;top:768.10px;font-size:14.4px;line-height:23.0px;color:#ffffff;letter-spacing:0.067px;">Spaces: 4</span>
<span class="t st" style="left:995.00px;top:768.10px;font-size:14.4px;line-height:23.0px;color:#ffffff;letter-spacing:0.244px;">UTF-8</span>
<span class="t st" style="left:1057.00px;top:768.10px;font-size:14.4px;line-height:23.0px;color:#ffffff;letter-spacing:-0.648px;">LF</span>
<span class="t st" style="left:1092.80px;top:768.10px;font-size:14.4px;line-height:23.0px;color:#ffffff;letter-spacing:0.151px;">Markdown</span>
<span class="t st" style="left:1201.00px;top:768.10px;font-size:14.4px;line-height:23.0px;color:#ffffff;letter-spacing:0.264px;">Prettier</span>
</div></body></html>
